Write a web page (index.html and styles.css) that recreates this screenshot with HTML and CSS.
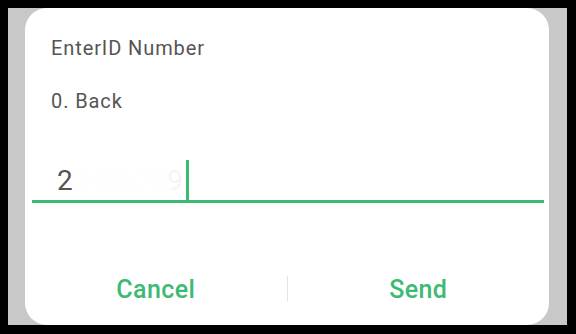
FILE: index.html
```html
<!DOCTYPE html>
<html lang="en">
<head>
  <meta charset="UTF-8" />
  <meta name="viewport" content="width=device-width, initial-scale=1.0"/>
  <title>Enter ID Number</title>
  <link rel="stylesheet" href="styles.css">
</head>
<body>

<div class="screen">
  <div class="dialog">
    <div class="dialog-body">
      <div class="prompt">EnterID Number</div>
      <div class="prompt">0. Back</div>
    </div>

    <div class="input-row">
      <span class="input-text">2<span class="hidden-digits">345678</span><span class="faint-digit">9</span></span>
      <span class="cursor"></span>
    </div>

    <div class="button-row">
      <button class="dialog-button">Cancel</button>
      <span class="divider"></span>
      <button class="dialog-button">Send</button>
    </div>
  </div>
</div>

</body>
</html>
```

FILE: styles.css
```css
html, body {
  margin: 0;
  padding: 0;
  background: black;
  font-family: Roboto, "Noto Sans", Arial, sans-serif;
  overflow: hidden;
}

body {
  width: 576px;
  height: 334px;
  padding: 8px 9px 9px 8px;
  box-sizing: border-box;
}

.screen {
  height: 100%;
  background: #c8c8c8;
  padding: 0 18px 0 17px;
  box-sizing: border-box;
}

.dialog {
  height: 100%;
  background: white;
  border-radius: 22px;
  display: flex;
  flex-direction: column;
  box-sizing: border-box;
  padding: 29px 5px 0 7px;
}

/* Prompt lines */
.dialog-body {
  padding-left: 19px;
  display: flex;
  flex-direction: column;
  gap: 31px;
}

.prompt {
  font-size: 20px;
  line-height: 22px;
  letter-spacing: 0.9px;
  color: #555555;
}

/* Input field */
.input-row {
  margin-top: 48px;
  height: 40px;
  border-bottom: 3px solid #3dba74;
  display: flex;
  align-items: flex-start;
  padding-left: 25px;
}

.input-text {
  font-size: 28px;
  line-height: 34px;
  margin-top: 4px;
  color: #555555;
}

.hidden-digits {
  color: #fefefe;
}

.faint-digit {
  color: #f5f5f5;
}

.cursor {
  width: 3px;
  height: 40px;
  background: #3dba74;
  margin-left: 3px;
}

/* Buttons */
.button-row {
  display: flex;
  align-items: center;
  margin: 68px -5px 0 -7px;
  height: 36px;
}

.dialog-button {
  flex: 1;
  background: none;
  border: none;
  padding: 0;
  font-family: Roboto, "Noto Sans", Arial, sans-serif;
  font-size: 25px;
  font-weight: 500;
  letter-spacing: 0.4px;
  color: #3dba74;
  cursor: pointer;
}

.divider {
  width: 1px;
  height: 26px;
  background: #e4e4e4;
}
```
